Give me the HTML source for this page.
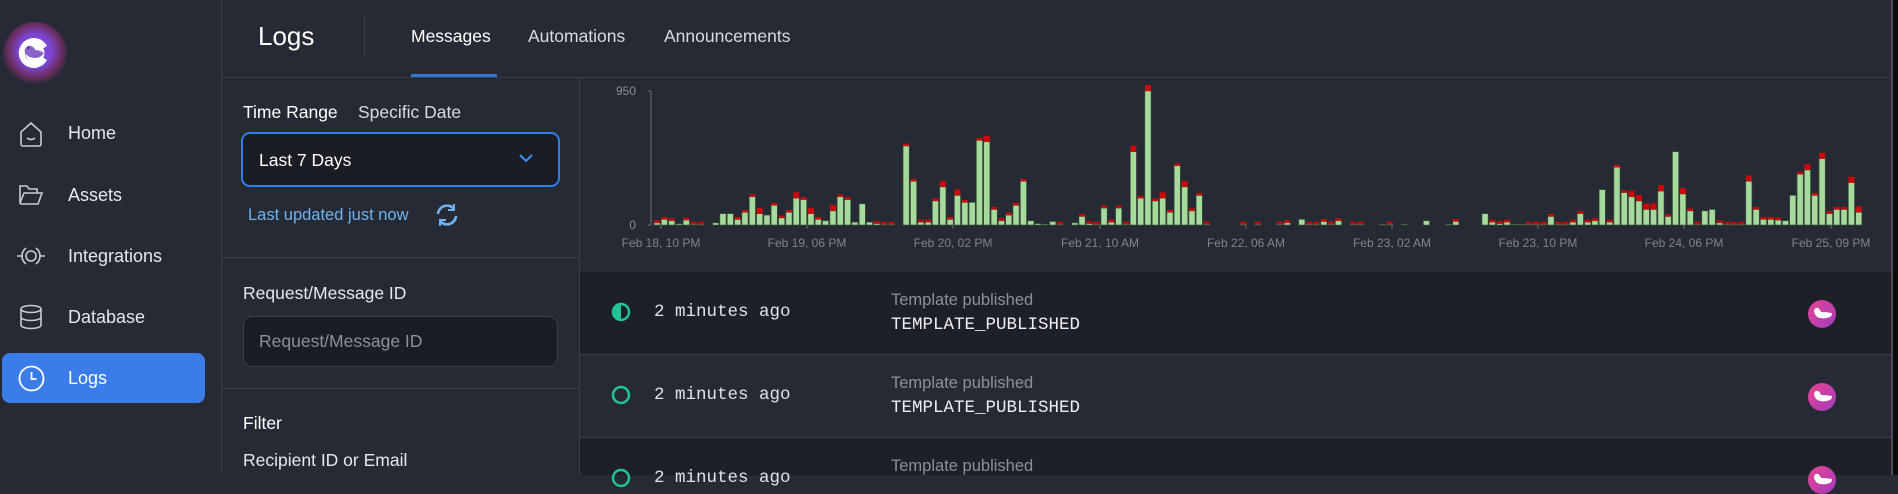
<!DOCTYPE html>
<html><head><meta charset="utf-8"><style>
*{box-sizing:border-box;margin:0;padding:0}
body{width:1898px;height:475px;overflow:hidden;background:#262a35;font-family:"Liberation Sans",sans-serif;color:#e8eaee;position:relative}
.a{position:absolute;white-space:nowrap}
.nav{font-size:18px;color:#e6e8ec;left:68px;line-height:20px;margin-top:-10px}
.mono{font-family:"Liberation Mono",monospace}
</style></head><body>
<!-- sidebar -->
<div class="a" style="left:221px;top:0;width:1px;height:475px;background:#3a3e4a"></div>
<div class="a" style="left:3px;top:22px;width:64px;height:64px;border-radius:50%;background:radial-gradient(circle at 50% 45%,#8a4fe0 0%,#7a44d0 35%,rgba(170,50,140,.55) 55%,rgba(38,42,53,0) 72%)"></div>
<svg class="a" style="left:17px;top:35px" width="36" height="36" viewBox="0 0 36 36">
<path d="M30 11 A15 15 0 1 0 30 25 L25 22 A9 9 0 1 1 25 14Z" fill="#fff"/>
<circle cx="18" cy="18" r="9.5" fill="#fff"/>
<path d="M8 14 q2-4 6-3 q3 1 4 4 q5 0 9 3 q-3 5-9 5 q-6 0-9-4 q-2-3-1-5z" fill="#8a62c8"/>
<circle cx="11.5" cy="13" r="1" fill="#3a2060"/>
</svg>
<svg class="a" style="left:19px;top:120px" width="24" height="28" viewBox="0 0 24 28" fill="none" stroke="#c8cbd2" stroke-width="1.6"><path d="M2 12 L12 3 L22 12 V24 a2 2 0 0 1-2 2 H4 a2 2 0 0 1-2-2z"/><path d="M8 18 q4 3 8 0"/></svg>
<div class="a nav" style="top:133px">Home</div>
<svg class="a" style="left:18px;top:183px" width="26" height="24" viewBox="0 0 26 24" fill="none" stroke="#c8cbd2" stroke-width="1.6"><path d="M2 20 V3 h7 l2 3 h8 v4"/><path d="M2 20 l4-10 h18 l-4 11 H3z"/></svg>
<div class="a nav" style="top:195px">Assets</div>
<svg class="a" style="left:16px;top:244px" width="30" height="24" viewBox="0 0 30 24" fill="none" stroke="#c8cbd2" stroke-width="1.6"><circle cx="15" cy="12" r="5"/><path d="M1 12h5M24 12h5M10 4 a10 10 0 0 0 0 16M20 4 a10 10 0 0 1 0 16"/></svg>
<div class="a nav" style="top:256px">Integrations</div>
<svg class="a" style="left:19px;top:304px" width="24" height="26" viewBox="0 0 24 26" fill="none" stroke="#c8cbd2" stroke-width="1.6"><ellipse cx="12" cy="5" rx="10" ry="3.5"/><path d="M2 5v16c0 2 4.5 3.5 10 3.5s10-1.5 10-3.5V5M2 13c0 2 4.5 3.5 10 3.5s10-1.5 10-3.5"/></svg>
<div class="a nav" style="top:317px">Database</div>
<div class="a" style="left:2px;top:353px;width:203px;height:50px;border-radius:8px;background:#3a7de8"></div>
<svg class="a" style="left:18px;top:365px" width="27" height="27" viewBox="0 0 27 27" fill="none" stroke="#fff" stroke-width="1.8"><circle cx="13.5" cy="13.5" r="12"/><path d="M13.5 7v7h5"/></svg>
<div class="a nav" style="top:378px;color:#fff">Logs</div>
<!-- header -->
<div class="a" style="left:258px;top:36px;margin-top:-15px;font-size:26px;line-height:30px;color:#fff">Logs</div>
<div class="a" style="left:364px;top:16px;width:1px;height:40px;background:#3a3e4a"></div>
<div class="a" style="left:411px;top:36px;margin-top:-10px;font-size:17.5px;line-height:20px;color:#fff">Messages</div>
<div class="a" style="left:411px;top:74px;width:86px;height:3px;background:#2f76d0"></div>
<div class="a" style="left:528px;top:36px;margin-top:-10px;font-size:17.5px;line-height:20px;color:#d8dbe0">Automations</div>
<div class="a" style="left:664px;top:36px;margin-top:-10px;font-size:17.5px;line-height:20px;color:#d8dbe0">Announcements</div>
<div class="a" style="left:222px;top:77px;width:1671px;height:1px;background:#3a3e4a"></div>
<!-- left panel -->
<div class="a" style="left:579px;top:77px;width:1px;height:398px;background:#3a3e4a"></div>
<div class="a" style="left:243px;top:102px;font-size:17.5px;line-height:20px;color:#fff">Time Range</div>
<div class="a" style="left:358px;top:102px;font-size:17.5px;line-height:20px;color:#d8dbe0">Specific Date</div>
<div class="a" style="left:241px;top:132px;width:319px;height:55px;border:2.5px solid #2f7fe8;border-radius:9px;background:#1b1d25"></div>
<div class="a" style="left:259px;top:150px;font-size:17.5px;line-height:20px;color:#fff">Last 7 Days</div>
<svg class="a" style="left:518px;top:153px" width="16" height="10" viewBox="0 0 16 10" fill="none" stroke="#3c8ff0" stroke-width="2"><path d="M2 2l6 6 6-6"/></svg>
<div class="a" style="left:248px;top:205px;font-size:16.5px;line-height:20px;color:#6fb2f2">Last updated just now</div>
<svg class="a" style="left:433px;top:203px" width="28" height="24" viewBox="0 0 28 24" fill="none" stroke="#6fb2f2" stroke-width="2.6"><path d="M5 11a9 9 0 0 1 16-5M23 13a9 9 0 0 1-16 5"/><path d="M21 1v6h-6M7 23v-6h6" stroke-width="2"/></svg>
<div class="a" style="left:222px;top:257px;width:357px;height:1px;background:#3a3e4a"></div>
<div class="a" style="left:243px;top:283px;font-size:17.5px;line-height:20px;color:#e6e8ec">Request/Message ID</div>
<div class="a" style="left:243px;top:316px;width:315px;height:51px;border:1px solid #3a3e4a;border-radius:9px;background:#1b1d25"></div>
<div class="a" style="left:259px;top:331px;font-size:17.5px;line-height:20px;color:#8c9099">Request/Message ID</div>
<div class="a" style="left:222px;top:388px;width:357px;height:1px;background:#3a3e4a"></div>
<div class="a" style="left:243px;top:413px;font-size:17.5px;line-height:20px;color:#fff">Filter</div>
<div class="a" style="left:243px;top:450px;font-size:17.5px;line-height:20px;color:#e6e8ec">Recipient ID or Email</div>
<!-- chart -->
<svg id="ch" class="a" style="left:580px;top:78px" width="1311" height="194"></svg>
<!-- rows -->
<div class="a" style="left:580px;top:272px;width:1311px;height:82px;background:#1e2029"></div>
<div class="a" style="left:580px;top:354px;width:1311px;height:1px;background:#3a3e4a"></div>
<div class="a" style="left:580px;top:437px;width:1311px;height:1px;background:#3a3e4a"></div>
<div class="a" style="left:580px;top:438px;width:1311px;height:37px;background:#1e2029"></div>
<div class="a" style="left:1891px;top:0;width:2px;height:475px;background:#4a4d58"></div>
<div class="a" style="left:1893px;top:0;width:5px;height:475px;background:#0b0b0e"></div>

<svg class="a" style="left:611px;top:302px" width="20" height="20"><circle cx="10" cy="10" r="8" fill="none" stroke="#22c497" stroke-width="2.5"/><path d="M10 2a8 8 0 0 0 0 16z" fill="#22c497"/></svg>
<div class="a mono" style="left:654px;top:302px;font-size:17.5px;line-height:20px;color:#e0e2e8">2 minutes ago</div>
<div class="a" style="left:891px;top:290px;font-size:16.5px;line-height:20px;color:#8c9099">Template published</div>
<div class="a mono" style="left:891px;top:315px;font-size:17.5px;line-height:20px;color:#eceef2">TEMPLATE_PUBLISHED</div>

<svg class="a" style="left:611px;top:385px" width="20" height="20"><circle cx="10" cy="10" r="8" fill="none" stroke="#22c497" stroke-width="2.5"/></svg>
<div class="a mono" style="left:654px;top:385px;font-size:17.5px;line-height:20px;color:#e0e2e8">2 minutes ago</div>
<div class="a" style="left:891px;top:373px;font-size:16.5px;line-height:20px;color:#8c9099">Template published</div>
<div class="a mono" style="left:891px;top:398px;font-size:17.5px;line-height:20px;color:#eceef2">TEMPLATE_PUBLISHED</div>

<svg class="a" style="left:611px;top:468px" width="20" height="20"><circle cx="10" cy="10" r="8" fill="none" stroke="#22c497" stroke-width="2.5"/></svg>
<div class="a mono" style="left:654px;top:468px;font-size:17.5px;line-height:20px;color:#e0e2e8">2 minutes ago</div>
<div class="a" style="left:891px;top:456px;font-size:16.5px;line-height:20px;color:#8c9099">Template published</div>

<svg class="a" style="left:1808px;top:300px" width="28" height="28" viewBox="0 0 28 28"><defs><linearGradient id="g" x1="0" y1="0" x2="1" y2="1"><stop offset="0" stop-color="#e8448f"/><stop offset="1" stop-color="#a33ac0"/></linearGradient></defs><circle cx="14" cy="14" r="14" fill="url(#g)"/><path d="M6 11q1-4 4-3q2 1 3 4q5 0 11 1q0 3-2 4q-5 2-10 1q-4-1-5-4q-1-1-1-3z" fill="#fff"/></svg>
<svg class="a" style="left:1808px;top:383px" width="28" height="28" viewBox="0 0 28 28"><circle cx="14" cy="14" r="14" fill="url(#g)"/><path d="M6 11q1-4 4-3q2 1 3 4q5 0 11 1q0 3-2 4q-5 2-10 1q-4-1-5-4q-1-1-1-3z" fill="#fff"/></svg>
<svg class="a" style="left:1808px;top:466px" width="28" height="28" viewBox="0 0 28 28"><circle cx="14" cy="14" r="14" fill="url(#g)"/><path d="M6 11q1-4 4-3q2 1 3 4q5 0 11 1q0 3-2 4q-5 2-10 1q-4-1-5-4q-1-1-1-3z" fill="#fff"/></svg>

<script>
(function(){
var s=document.getElementById('ch'),h='';
var ox=580,oy=78;
function X(x){return x-ox}function Y(y){return y-oy}
var base=225,top=91,H=base-top;
h+='<line x1="'+X(651)+'" y1="'+Y(top)+'" x2="'+X(651)+'" y2="'+Y(base)+'" stroke="#6a6e78" stroke-width="1"/>';
h+='<line x1="'+X(648)+'" y1="'+Y(top)+'" x2="'+X(651)+'" y2="'+Y(top)+'" stroke="#6a6e78"/>';
h+='<line x1="'+X(648)+'" y1="'+Y(base)+'" x2="'+X(651)+'" y2="'+Y(base)+'" stroke="#6a6e78"/>';
h+='<text x="'+X(636)+'" y="'+Y(top+4)+'" fill="#8a8f99" font-size="12" text-anchor="end" font-family="Liberation Sans">950</text>';
h+='<text x="'+X(636)+'" y="'+Y(base+4)+'" fill="#8a8f99" font-size="12" text-anchor="end" font-family="Liberation Sans">0</text>';
var A=[[15,1],[40,1],[30,1],[8,0],[35,1],[5,1],[5,1],[0,0],[15,0],[80,0],[80,0],[40,1],[90,1],[200,1],[80,2],[70,0],[140,1],[50,1],[90,1],[190,2],[180,1],[80,2],[40,1],[30,0],[100,2],[200,1],[180,1],[20,0],[150,0],[20,0],[10,1],[5,1],[5,1],[0,0],[560,1],[310,1],[20,1],[20,1],[170,1],[270,2],[40,1],[210,2],[160,1],[160,0],[600,1],[590,2],[110,1],[30,1],[70,1],[140,1],[310,1],[30,0],[10,0],[5,0],[25,0],[5,1],[0,0],[15,0],[60,1],[10,1],[5,1],[120,1],[20,1],[120,1],[5,1],[520,2],[190,1],[950,2],[170,1],[190,2],[90,1],[420,1],[270,2],[100,1],[210,1],[5,1]];
var B={77:[0,0],80:[5,1],82:[5,1],85:[5,1],86:[15,1],88:[40,0],89:[5,1],90:[5,1],91:[25,1],92:[5,1],93:[30,1],95:[5,1],96:[5,1],99:[5,0],100:[5,1],102:[5,0],105:[30,0],108:[5,0],109:[25,1],113:[80,0],114:[20,1],115:[10,1],116:[20,1],117:[5,0],118:[5,0],119:[5,1],120:[5,1],121:[5,1],122:[60,1],123:[5,1],124:[5,1],125:[20,1],126:[80,1],127:[20,1],128:[30,1],129:[250,0],130:[20,1],131:[410,1],132:[230,1],133:[200,2],134:[170,2],135:[110,2],136:[110,2],137:[240,2],138:[60,1],139:[520,0],140:[220,2],141:[100,1],142:[5,1],143:[100,0],144:[110,0],145:[15,1],146:[5,1],147:[5,1],148:[5,1],149:[310,2],150:[110,1],151:[40,1],152:[40,1],153:[35,1],154:[30,0],155:[210,0],156:[360,1],157:[390,2],158:[210,1],159:[470,2],160:[80,1],161:[110,1],162:[110,1],163:[300,2],164:[90,2]};
var pitch=(1885-654)/168;
for(var i=0;i<169;i++){var d=i<A.length?A[i]:B[i];if(!d)continue;var v=d[0],r=d[1];
 var x=654+i*pitch,w=pitch-1.2;var bh=v/950*H;var rh=r==2?6:(r==1?2.5:0);
 if(v>0){h+='<rect x="'+X(x).toFixed(1)+'" y="'+Y(base-bh).toFixed(1)+'" width="'+w.toFixed(1)+'" height="'+bh.toFixed(1)+'" fill="#a6da9c" stroke="#3d5a3a" stroke-width="0.6"/>';}
 if(rh){h+='<rect x="'+X(x).toFixed(1)+'" y="'+Y(base-bh-rh).toFixed(1)+'" width="'+w.toFixed(1)+'" height="'+rh+'" fill="#c80a0a"/>';}
}
var L=[["Feb 18, 10 PM",661],["Feb 19, 06 PM",807],["Feb 20, 02 PM",953],["Feb 21, 10 AM",1100],["Feb 22, 06 AM",1246],["Feb 23, 02 AM",1392],["Feb 23, 10 PM",1538],["Feb 24, 06 PM",1684],["Feb 25, 09 PM",1831]];
L.forEach(function(l){h+='<line x1="'+X(l[1])+'" y1="'+Y(base)+'" x2="'+X(l[1])+'" y2="'+Y(base+4)+'" stroke="#6a6e78"/>';h+='<text x="'+X(l[1])+'" y="'+Y(247)+'" fill="#7f848e" font-size="12" text-anchor="middle" font-family="Liberation Sans">'+l[0]+'</text>';});
s.innerHTML=h;})();
</script>
</body></html>
